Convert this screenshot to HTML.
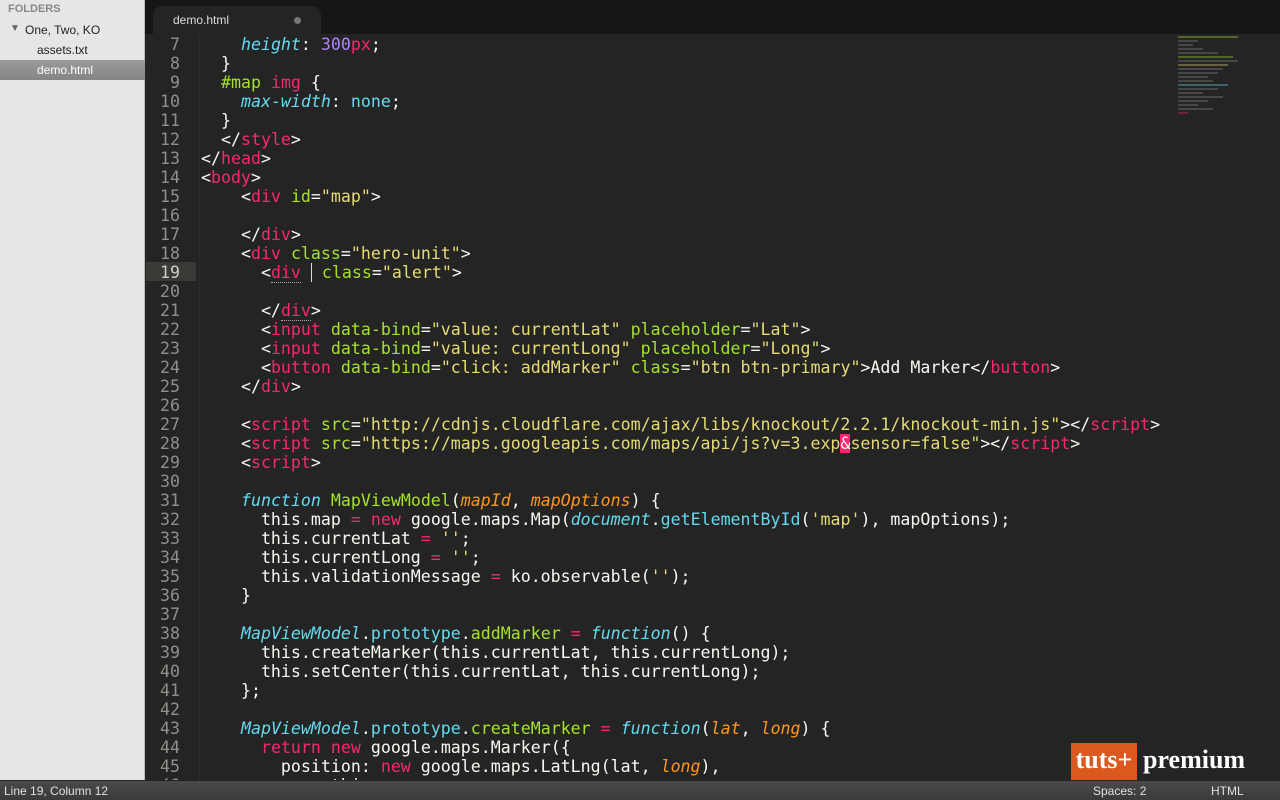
<!DOCTYPE html>
<html><head><meta charset="utf-8"><style>
*{margin:0;padding:0;box-sizing:border-box}
body{width:1280px;height:800px;overflow:hidden;background:#242424;position:relative;font-family:"Liberation Sans",sans-serif}
#side{position:absolute;left:0;top:0;width:145px;height:780px;background:#e6e6e6;border-right:1px solid #bbb}
#side div{position:absolute;font-size:12px;color:#222}
#tabs{position:absolute;left:145px;top:0;width:1135px;height:34px;background:#161616}
#tab{position:absolute;left:8px;top:6px;width:168px;height:28px;background:#242424;border-radius:9px 9px 0 0;color:#ddd;font-size:12px;padding:7px 0 0 20px}
#tab:after{content:"";position:absolute;right:20px;top:11px;width:7px;height:7px;border-radius:50%;background:#777}
#gut{position:absolute;left:146px;top:34px;width:54px;height:746px;background:#242424;border-right:1px solid #2c2c2c}
#hl{position:absolute;left:146px;top:262px;width:50px;height:19px;background:#3a3a36}
pre{position:absolute;top:35px;font-family:"DejaVu Sans Mono","Liberation Mono",monospace;font-size:16.6px;line-height:19px;color:#f8f8f2}
#nums{left:146px;width:34px;text-align:right;color:#8f908a}
#code{left:201px}
.p{color:#f92672}.g{color:#a6e22e}.y{color:#e6db74}.c{color:#66d9ef}.i{font-style:italic}.v{color:#ae81ff}.o{color:#fd971f;font-style:italic}
.u{border-bottom:1px dotted #aaa}
.amp{background:#f92672;color:#f8f8f2}
#mini{position:absolute;left:1178px;top:36px;width:70px;height:130px;opacity:.35}
#mini i{display:block;height:2px;margin-bottom:2px;background:#888}
#status{position:absolute;left:0;top:780px;width:1280px;height:20px;background:linear-gradient(#4a4a4a,#3a3a3a);border-top:1px solid #222;color:#e0e0e0;font-size:12px}
#status span{position:absolute;top:3px}
#logo{position:absolute;left:1071px;top:743px;width:66px;height:37px;background:#d9591f;color:#fff;font-family:"Liberation Serif",serif;font-weight:bold;font-size:26px;text-align:center;line-height:34px}
#prem{position:absolute;left:1143px;top:743px;color:#fff;font-family:"Liberation Serif",serif;font-weight:bold;font-size:26px;line-height:34px}
</style></head><body>
<div id="side">
<div style="left:8px;top:3px;color:#888;font-weight:bold;font-size:11px">FOLDERS</div>
<div style="left:10px;top:23px;font-size:10px;color:#666">▼</div>
<div style="left:25px;top:23px">One, Two, KO</div>
<div style="left:37px;top:43px">assets.txt</div>
<div style="left:0;top:60px;width:145px;height:20px;background:linear-gradient(#9a9a9a,#858585)"></div>
<div style="left:37px;top:63px;color:#fff">demo.html</div>
</div>
<div id="tabs"><div id="tab">demo.html</div></div>
<div id="gut"></div><div id="hl"></div>
<div id="mini"><i style="width:60px;background:#a6e22e"></i><i style="width:20px"></i><i style="width:15px"></i><i style="width:25px"></i><i style="width:40px"></i><i style="width:55px;background:#a6e22e"></i><i style="width:60px"></i><i style="width:50px;background:#e6db74"></i><i style="width:45px"></i><i style="width:40px"></i><i style="width:30px"></i><i style="width:35px"></i><i style="width:50px;background:#66d9ef"></i><i style="width:40px"></i><i style="width:25px"></i><i style="width:45px"></i><i style="width:30px"></i><i style="width:20px"></i><i style="width:35px"></i><i style="width:10px;background:#f92672"></i></div>
<pre id="nums">7
8
9
10
11
12
13
14
15
16
17
18
<span style="color:#ccc">19</span>
20
21
22
23
24
25
26
27
28
29
30
31
32
33
34
35
36
37
38
39
40
41
42
43
44
45
46</pre>
<pre id="code">    <span class="c i">height</span>: <span class="v">300</span><span class="p">px</span>;
  }
  <span class="g">#map</span> <span class="p">img</span> {
    <span class="c i">max-width</span>: <span class="c">none</span>;
  }
  &lt;/<span class="p">style</span>&gt;
&lt;/<span class="p">head</span>&gt;
&lt;<span class="p">body</span>&gt;
    &lt;<span class="p">div</span> <span class="g">id</span>=<span class="y">"map"</span>&gt;

    &lt;/<span class="p">div</span>&gt;
    &lt;<span class="p">div</span> <span class="g">class</span>=<span class="y">"hero-unit"</span>&gt;
      &lt;<span class="p u">div</span> <span style="border-left:1px solid #ddd"> </span><span class="g">class</span>=<span class="y">"alert"</span>&gt;

      &lt;/<span class="p u">div</span>&gt;
      &lt;<span class="p">input</span> <span class="g">data-bind</span>=<span class="y">"value: currentLat"</span> <span class="g">placeholder</span>=<span class="y">"Lat"</span>&gt;
      &lt;<span class="p">input</span> <span class="g">data-bind</span>=<span class="y">"value: currentLong"</span> <span class="g">placeholder</span>=<span class="y">"Long"</span>&gt;
      &lt;<span class="p">button</span> <span class="g">data-bind</span>=<span class="y">"click: addMarker"</span> <span class="g">class</span>=<span class="y">"btn btn-primary"</span>&gt;Add Marker&lt;/<span class="p">button</span>&gt;
    &lt;/<span class="p">div</span>&gt;

    &lt;<span class="p">script</span> <span class="g">src</span>=<span class="y">"http://cdnjs.cloudflare.com/ajax/libs/knockout/2.2.1/knockout-min.js"</span>&gt;&lt;/<span class="p">script</span>&gt;
    &lt;<span class="p">script</span> <span class="g">src</span>=<span class="y">"https://maps.googleapis.com/maps/api/js?v=3.exp</span><span class="amp">&amp;</span><span class="y">sensor=false"</span>&gt;&lt;/<span class="p">script</span>&gt;
    &lt;<span class="p">script</span>&gt;

    <span class="c i">function</span> <span class="g">MapViewModel</span>(<span class="o">mapId</span>, <span class="o">mapOptions</span>) {
      this.map <span class="p">=</span> <span class="p">new</span> google.maps.Map(<span class="c i">document</span>.<span class="c">getElementById</span>(<span class="y">'map'</span>), mapOptions);
      this.currentLat <span class="p">=</span> <span class="y">''</span>;
      this.currentLong <span class="p">=</span> <span class="y">''</span>;
      this.validationMessage <span class="p">=</span> ko.observable(<span class="y">''</span>);
    }

    <span class="c i">MapViewModel</span>.<span class="c">prototype</span>.<span class="g">addMarker</span> <span class="p">=</span> <span class="c i">function</span>() {
      this.createMarker(this.currentLat, this.currentLong);
      this.setCenter(this.currentLat, this.currentLong);
    };

    <span class="c i">MapViewModel</span>.<span class="c">prototype</span>.<span class="g">createMarker</span> <span class="p">=</span> <span class="c i">function</span>(<span class="o">lat</span>, <span class="o">long</span>) {
      <span class="p">return</span> <span class="p">new</span> google.maps.Marker({
        position: <span class="p">new</span> google.maps.LatLng(lat, <span class="o">long</span>),
        map: this,</pre>
<div id="logo">tuts+</div><div id="prem">premium</div>
<div id="status"><span style="left:4px">Line 19, Column 12</span><span style="left:1093px">Spaces: 2</span><span style="left:1211px">HTML</span></div>
</body></html>
